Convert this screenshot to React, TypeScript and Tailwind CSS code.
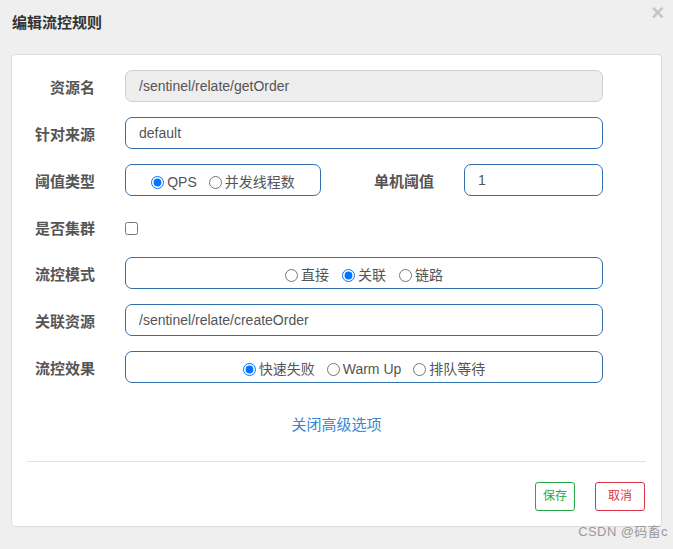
import React from 'react';

const FONT = { fontFamily: '"Liberation Sans", Arial, "Noto Sans CJK SC", sans-serif' };

const Radio = ({ label, checked }: { label: string; checked?: boolean }) => (
  <label className="flex items-center gap-[3px] text-[14px] text-[#555]">
    <input type="radio" defaultChecked={checked} className="m-0 h-[13px] w-[13px]" />
    <span className="pt-[1px]">{label}</span>
  </label>
);

const Field = ({ label, children, h = 'h-[32px]' }: { label: string; children: React.ReactNode; h?: string }) => (
  <div className={`flex items-center ${h}`}>
    <div className="w-[83px] pt-[5px] text-right text-[15px] font-bold text-[#555]">{label}</div>
    <div className="ml-[30px] flex items-center">{children}</div>
  </div>
);

const boxCls = 'h-[32px] rounded-[7px] border border-[#2f6fad] bg-white';

export default function App() {
  return (
    <div className="relative w-[673px] h-[549px] bg-[#efefef] overflow-hidden" style={FONT}>
      {/* header */}
      <div className="flex items-start justify-between pl-3 pr-[9px] pt-[2px] h-[54px]">
        <h4 className="mt-[10px] text-[15px] font-bold text-[#333]">编辑流控规则</h4>
        <span className="mt-[2px] text-[22px] leading-[18px] font-bold text-[#c5c5c5]">×</span>
      </div>

      {/* body card */}
      <div className="mx-[11px] w-[651px] h-[473px] rounded-[4px] border border-[#dcdcdc] bg-white flex flex-col">
        <div className="flex flex-col gap-[15px] pt-[15px]">
          <Field label="资源名">
            <div className="w-[478px] h-[32px] rounded-[7px] border border-[#cfcfcf] bg-[#eeeeee] flex items-center px-[13px] text-[14px] text-[#555]">
              /sentinel/relate/getOrder
            </div>
          </Field>
          <Field label="针对来源">
            <div className={`${boxCls} w-[478px] flex items-center px-[13px] text-[14px] text-[#555]`}>default</div>
          </Field>
          <Field label="阈值类型">
            <div className={`${boxCls} w-[196px] flex items-center justify-center gap-[12px] pt-[4px]`}>
              <Radio label="QPS" checked />
              <Radio label="并发线程数" />
            </div>
            <div className="w-[113px] pt-[5px] text-right text-[15px] font-bold text-[#555]">单机阈值</div>
            <div className={`${boxCls} ml-[30px] w-[139px] flex items-center px-[13px] text-[14px] text-[#555]`}>1</div>
          </Field>
          <Field label="是否集群" h="h-[31px]">
            <input type="checkbox" className="m-0 mt-[4px] h-[13px] w-[13px]" />
          </Field>
          <Field label="流控模式">
            <div className={`${boxCls} w-[478px] flex items-center justify-center gap-[13px] pt-[4px]`}>
              <Radio label="直接" />
              <Radio label="关联" checked />
              <Radio label="链路" />
            </div>
          </Field>
          <Field label="关联资源">
            <div className={`${boxCls} w-[478px] flex items-center px-[13px] text-[14px] text-[#555]`}>
              /sentinel/relate/createOrder
            </div>
          </Field>
          <Field label="流控效果">
            <div className={`${boxCls} w-[478px] flex items-center justify-center gap-[12px] pt-[4px]`}>
              <Radio label="快速失败" checked />
              <Radio label="Warm Up" />
              <Radio label="排队等待" />
            </div>
          </Field>
        </div>

        <div className="mt-[31px] text-center text-[15px] text-[#3a86cf]">关闭高级选项</div>

        <div className="mx-[15px] mt-[24px] border-t border-[#e3e3e3]" />

        <div className="flex justify-end gap-[20px] px-[16px] mt-[20px]">
          <button className="h-[29px] w-[40px] rounded-[3px] border border-[#28a745] bg-white text-[12px] text-[#28a745]">保存</button>
          <button className="h-[29px] w-[50px] rounded-[3px] border border-[#dc3545] bg-white text-[12px] text-[#dc3545]">取消</button>
        </div>
      </div>

      <div className="absolute right-[5px] bottom-[8px] text-[13px] tracking-[0.4px] text-[#9a9a9a]">CSDN @码畜c</div>
    </div>
  );
}
